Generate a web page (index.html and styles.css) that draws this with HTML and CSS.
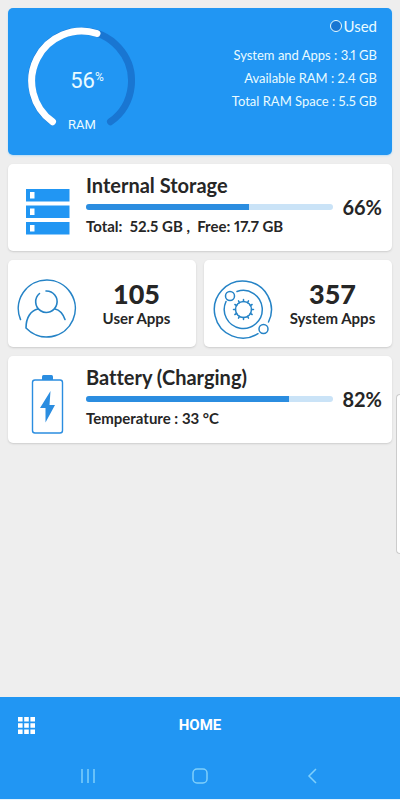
FILE: index.html
```html
<!DOCTYPE html>
<html lang="en">
<head>
<meta charset="utf-8">
<meta name="viewport" content="width=device-width, initial-scale=1">
<title>Device status</title>
<link rel="stylesheet" href="styles.css">
</head>
<body>
<main class="content">
  <section class="hero">
    <div class="gauge">
      <svg class="gauge-ring" viewBox="0 0 110 110" aria-hidden="true">
        <path d="M26.500 95.700A50 50 0 1 1 84.500 95.700" stroke="#1976d2"/>
        <path d="M26.500 95.700A50 50 0 0 1 71 7.500" stroke="#fff"/>
      </svg>
      <div class="gauge-value">56<sup>%</sup></div>
      <div class="gauge-label">RAM</div>
    </div>
    <div class="memory">
      <p class="legend"><span class="dot"></span>Used</p>
      <p>System and Apps : 3.1 GB</p>
      <p>Available RAM : 2.4 GB</p>
      <p>Total RAM Space : 5.5 GB</p>
    </div>
  </section>

  <section class="card wide">
    <svg class="icon" viewBox="0 0 60 64" aria-hidden="true">
      <g fill="#2196f3"><path d="M9 13h43.500v12.500H9zM9 29.500h43.500v12.500H9zM9 46h43.500v12.500H9z"/></g>
      <path fill="#fff" d="M13 16h4.500v6.500H13zM13 32.500h4.500v6.500H13zM13 49h4.500v6.500H13z"/>
    </svg>
    <div class="details">
      <h2>Internal Storage</h2>
      <div class="meter-row">
        <div class="track"><div class="fill" style="width:66%"></div></div>
        <span class="percent">66%</span>
      </div>
      <p>Total:&nbsp; 52.5 GB ,&nbsp; Free: 17.7 GB</p>
    </div>
  </section>

  <div class="pair">
    <section class="card apps">
      <svg class="icon" viewBox="0 0 60 60" fill="none" stroke="#2583c6" stroke-width="1.600" stroke-linecap="round" aria-hidden="true">
        <path d="M3.500 40.500A28.500 28.500 0 1 1 9 49C9 38 14 31.500 21 30"/>
        <path d="M22.500 14.500A10.700 10.700 0 1 0 29 12"/>
        <path d="M38 30C43 31 46 35 48 40.500"/>
      </svg>
      <div class="count"><strong>105</strong><span>User Apps</span></div>
    </section>
    <section class="card apps">
      <svg class="icon" viewBox="0 0 60 60" fill="none" stroke="#2583c6" stroke-width="1.500" stroke-linecap="round" aria-hidden="true">
        <path d="M45 54.700A28.500 28.500 0 1 1 55.500 43"/>
        <path d="M13 22.500A19 19 0 1 0 24 12.500"/>
        <circle cx="17" cy="17" r="4.500"/><circle cx="50.500" cy="50" r="4.500"/>
        <circle cx="30.500" cy="30.500" r="8"/>
        <path d="M30.500 22.500v-2M34.500 23.600l1-1.700M37.400 26.500l1.700-1M38.500 30.500h2M37.400 34.500l1.700 1M34.500 37.400l1 1.700M30.500 38.500v2M26.500 37.400l-1 1.700M23.600 34.500l-1.700 1M22.500 30.500h-2M23.600 26.500l-1.700-1M26.500 23.600l-1-1.700"/>
      </svg>
      <div class="count"><strong>357</strong><span>System Apps</span></div>
    </section>
  </div>

  <section class="card wide">
    <svg class="icon" viewBox="0 0 60 64" aria-hidden="true">
      <path fill="#2b8de0" d="M25 8.500q0-1.500 1.500-1.500h8q1.500 0 1.500 1.500V12H25z"/>
      <rect x="15.500" y="12" width="30" height="53" rx="2.500" fill="none" stroke="#2b8de0" stroke-width="1.400"/>
      <path fill="#2b8de0" d="M33.500 23L23 40h5.500v14.500L38 37h-5.500z"/>
    </svg>
    <div class="details">
      <h2>Battery (Charging)</h2>
      <div class="meter-row">
        <div class="track"><div class="fill" style="width:82%"></div></div>
        <span class="percent">82%</span>
      </div>
      <p>Temperature : 33 °C</p>
    </div>
  </section>
</main>

<div class="edge-handle"></div>

<footer class="bottom">
  <div class="toolbar">
    <button type="button" aria-label="Menu">
      <svg width="17" height="17" viewBox="0 0 17 17" fill="#fff" aria-hidden="true"><path d="M0 0h4.600v4.600H0zM6.200 0h4.600v4.600H6.200zM12.400 0H17v4.600h-4.600zM0 6.200h4.600v4.600H0zM6.200 6.200h4.600v4.600H6.200zM12.400 6.200H17v4.600h-4.600zM0 12.400h4.600V17H0zM6.200 12.400h4.600V17H6.200zM12.400 12.400H17V17h-4.600z"/></svg>
    </button>
    <h1>HOME</h1>
  </div>
  <nav class="system" aria-label="System">
    <button type="button" aria-label="Recents">
      <svg width="16" height="16" viewBox="0 0 16 16" aria-hidden="true"><path d="M2 1v14M8 1v14M14 1v14"/></svg>
    </button>
    <button type="button" aria-label="Home">
      <svg width="16" height="16" viewBox="0 0 16 16" aria-hidden="true"><rect x="1" y="1" width="14" height="14" rx="4"/></svg>
    </button>
    <button type="button" aria-label="Back">
      <svg width="16" height="16" viewBox="0 0 16 16" aria-hidden="true"><path d="M12 1L5 8l7 7"/></svg>
    </button>
  </nav>
</footer>
</body>
</html>
```
FILE: styles.css
```css
* { box-sizing: border-box; }

body {
  margin: 0;
  min-height: 100vh;
  display: flex;
  flex-direction: column;
  background: #eee;
  color: #262626;
  font-family: Lato, "Liberation Sans", sans-serif;
  font-variant-ligatures: none;
}

h1, h2, p { margin: 0; }

button {
  display: grid;
  place-items: center;
  padding: 0;
  border: 0;
  background: none;
}

.content {
  flex: 1;
  display: flex;
  flex-direction: column;
  gap: 9px;
  padding: 8px;
}

.hero {
  display: flex;
  justify-content: space-between;
  min-height: 147px;
  padding: 8px 15px 8px 18px;
  border-radius: 5px;
  background: #2196f3;
  box-shadow: 0 1px 2px #b8dcf5;
  color: #e9fbff;
}

.gauge {
  display: grid;
  justify-items: center;
  align-self: start;
  width: 110px;
  margin-top: 10px;
  font-family: Roboto, sans-serif;
}

.gauge > * { grid-area: 1 / 1; }

.gauge-ring {
  width: 110px;
  height: 110px;
  fill: none;
  stroke-width: 7px;
  stroke-linecap: round;
}

.gauge-value {
  align-self: center;
  padding-left: 12px;
  font-size: 22px;
  line-height: 24px;
}

.gauge-value sup {
  font-size: 12px;
  line-height: 12px;
  vertical-align: 7px;
}

.gauge-label {
  align-self: end;
  padding: 0 0 3px 2px;
  font-size: 13px;
  line-height: 16px;
}

.memory {
  text-align: right;
  font-size: 13px;
  font-variant-numeric: proportional-nums;
  line-height: 23px;
}

.memory .legend {
  display: flex;
  align-items: center;
  justify-content: flex-end;
  gap: 2px;
  margin-bottom: 8px;
  font-size: 15px;
  line-height: 20px;
}

.dot {
  width: 12px;
  height: 12px;
  border: 1px solid #e9fbff;
  border-radius: 50%;
  background: #1976d2;
}

.card {
  display: flex;
  min-height: 87px;
  border-radius: 5px;
  background: #fff;
  box-shadow: 0 1px 2px #ccc;
}

.wide { padding: 8px 10px 8px 9px; gap: 9px; }

.wide .icon {
  flex: none;
  width: 60px;
  height: 64px;
  margin-top: 4px;
  overflow: visible;
}

.details { flex: 1; }

.details h2 {
  font-size: 20px;
  font-weight: 700;
  line-height: 26px;
}

.details p {
  font-size: 15px;
  font-weight: 700;
  font-variant-numeric: proportional-nums;
  line-height: 20px;
}

.meter-row {
  display: flex;
  align-items: center;
  gap: 9px;
  height: 18px;
}

.track {
  flex: 1;
  height: 6px;
  border-radius: 3px;
  background: #cae3f7;
  overflow: hidden;
}

.fill {
  height: 100%;
  background: #2b8de0;
}

.percent {
  font-size: 20px;
  font-weight: 700;
  line-height: 18px;
}

.pair {
  display: grid;
  grid-template-columns: 1fr 1fr;
  gap: 8px;
}

.apps {
  align-items: center;
  gap: 8px;
  padding: 8px 8px 8px 9px;
}

.apps .icon {
  flex: none;
  width: 60px;
  height: 60px;
  margin-top: 10px;
}

.count {
  flex: 1;
  text-align: center;
  font-size: 15px;
  font-weight: 700;
  line-height: 19px;
  white-space: nowrap;
}

.count strong,
.count span { display: block; }

.count strong {
  font-size: 27px;
  line-height: 30px;
}

.edge-handle {
  position: absolute;
  top: 394px;
  right: 0;
  width: 4px;
  height: 160px;
  border: 1px solid #ccc;
  border-right: 0;
  border-radius: 4px 0 0 4px;
  background: #fff;
}

.bottom {
  background: #2196f3;
  border-bottom: 1px solid #e4f3fd;
  font-family: Roboto, sans-serif;
  color: #fff;
}

.toolbar {
  display: grid;
  grid-template-columns: 52px 1fr 52px;
  align-items: center;
  height: 56px;
}

.toolbar h1 {
  font-size: 15px;
  font-weight: 700;
  line-height: 20px;
  text-align: center;
}

.system {
  display: grid;
  grid-template-columns: repeat(3, 1fr);
  height: 46px;
  padding: 0 32px;
}

.system svg {
  fill: none;
  stroke: #7fd0fb;
  stroke-width: 1.5px;
}
```
